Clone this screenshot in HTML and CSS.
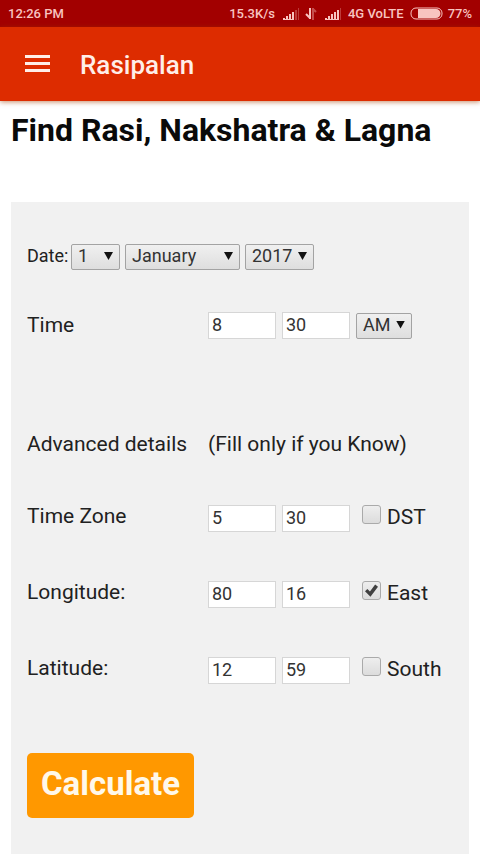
FILE: index.html
```html
<!DOCTYPE html>
<html lang="en">
<head>
<meta charset="utf-8">
<meta name="viewport" content="width=device-width, initial-scale=1">
<title>Rasipalan</title>
<link rel="stylesheet" href="styles.css">
</head>
<body>
<div class="status">
  <span>12:26 PM</span>
  <div class="status-right">
    <span>15.3K/s</span>
    <svg class="signal" width="17" height="12" viewBox="0 0 17 12" fill="currentColor"><path d="M0 10h2v2H0zM3 8h2v4H3zM6 6h2v6H6zM9 4h2v8H9z"/><path d="M0 11h11v1H0z"/><path opacity=".3" d="M12 2h2v10h-2zM15 0h1v12h-1z"/></svg>
    <svg class="arrows" width="12" height="13" viewBox="0 0 12 13" fill="none" stroke="currentColor" stroke-width="2"><path d="M5 1v11M5 11L1 7"/><path opacity=".4" d="M8 13V1M8 2l3 3"/></svg>
    <svg class="signal" width="17" height="12" viewBox="0 0 17 12" fill="currentColor"><path d="M0 10h2v2H0zM3 8h2v4H3zM6 6h2v6H6zM9 4h2v8H9zM12 2h2v10h-2z"/><path d="M0 11h14v1H0z"/><path opacity=".3" d="M15 0h1v12h-1z"/></svg>
    <span class="network">4G VoLTE</span>
    <svg class="battery" width="33" height="13" viewBox="0 0 33 13"><rect x="1" y="1" width="31" height="11" rx="5" fill="none" stroke="currentColor" stroke-width="1"/><path d="M8 2h18a4 4 0 0 1 0 9H8z" fill="currentColor"/></svg>
    <span>77%</span>
  </div>
</div>
<header class="appbar">
  <button class="menu" type="button" aria-label="Menu">
    <svg width="26" height="18" viewBox="0 0 26 18" fill="currentColor"><path d="M1 0h25v3H1zM1 7h25v3H1zM1 14h25v3H1z"/></svg>
  </button>
  <span class="brand">Rasipalan</span>
</header>
<main class="page">
  <h1>Find Rasi, Nakshatra &amp; Lagna</h1>
  <form class="card">
    <div class="date-row">
      <label for="day">Date:</label>
      <span class="select day"><select id="day"><option>1</option></select></span>
      <span class="select month"><select aria-label="Month"><option>January</option></select></span>
      <span class="select year"><select aria-label="Year"><option>2017</option></select></span>
    </div>
    <div class="row time-row">
      <label for="hour">Time</label>
      <div class="fields">
        <input class="num" id="hour" type="text" value="8">
        <input class="num" type="text" aria-label="Minutes" value="30">
        <span class="select ampm"><select aria-label="AM or PM"><option>AM</option></select></span>
      </div>
    </div>
    <div class="row note-row">
      <span>Advanced details</span>
      <span>(Fill only if you Know)</span>
    </div>
    <div class="row">
      <label for="tz">Time Zone</label>
      <div class="fields">
        <input class="num" id="tz" type="text" value="5">
        <input class="num" type="text" aria-label="Time zone minutes" value="30">
        <label class="check"><input type="checkbox">DST</label>
      </div>
    </div>
    <div class="row">
      <label for="lon">Longitude:</label>
      <div class="fields">
        <input class="num" id="lon" type="text" value="80">
        <input class="num" type="text" aria-label="Longitude minutes" value="16">
        <label class="check"><input type="checkbox" checked>East</label>
      </div>
    </div>
    <div class="row">
      <label for="lat">Latitude:</label>
      <div class="fields">
        <input class="num" id="lat" type="text" value="12">
        <input class="num" type="text" aria-label="Latitude minutes" value="59">
        <label class="check"><input type="checkbox">South</label>
      </div>
    </div>
    <button class="calculate" type="button">Calculate</button>
  </form>
</main>
</body>
</html>
```
FILE: styles.css
```css
* {
  box-sizing: border-box;
}

body {
  margin: 0;
  min-height: 100vh;
  display: flex;
  flex-direction: column;
  background: #fff;
  color: #212121;
  font-family: Roboto, sans-serif;
  font-size: 21px;
}

.status {
  display: flex;
  align-items: center;
  justify-content: space-between;
  height: 27px;
  padding: 0 8px;
  background: #a20000;
  color: #f8c4c0;
  font-size: 13px;
  font-weight: 500;
}

.status-right {
  display: flex;
  align-items: center;
  gap: 5px;
}

.signal {
  margin-left: 3px;
}

.network {
  margin: 0 1px;
  word-spacing: normal;
}

.appbar {
  position: relative;
  display: flex;
  align-items: center;
  gap: 30px;
  height: 74px;
  padding: 0 24px;
  background: #dd2c00;
  color: #ffeee8;
  box-shadow: 0 1px 5px rgba(160, 60, 0, 0.6);
}

.menu {
  display: flex;
  padding: 0;
  border: 0;
  background: none;
  color: inherit;
}

.brand {
  padding-top: 2px;
  font-size: 26px;
  font-weight: 500;
  line-height: 32px;
}

.page {
  flex: 1;
  display: flex;
  flex-direction: column;
  padding: 0 11px;
}

h1 {
  margin: 9px 0 52px;
  color: #0a0a0a;
  font-size: 32px;
  font-weight: 700;
  line-height: 40px;
}

.card {
  flex: 1;
  padding: 42px 16px 36px;
  background: #f1f1f1;
}

.date-row {
  display: flex;
  align-items: center;
  gap: 5px;
  margin-bottom: 42px;
  font-size: 18px;
  line-height: 24px;
}

.date-row label {
  width: 39px;
  padding-bottom: 2px;
}

.select {
  position: relative;
  display: inline-flex;
}

.select::after {
  content: "";
  position: absolute;
  top: 8px;
  right: 7px;
  width: 9px;
  height: 8px;
  background: #111;
  clip-path: polygon(0 0, 100% 0, 50% 100%);
  pointer-events: none;
}

select {
  appearance: none;
  width: 100%;
  height: 26px;
  padding: 0 6px 3px;
  border: 1px solid #a3a3a3;
  border-radius: 2px;
  background: linear-gradient(#f0f0f0, #dedede);
  color: #333;
  font: 18px Roboto, sans-serif;
}

.day {
  width: 49px;
}

.month {
  width: 115px;
}

.year {
  width: 69px;
}

.ampm {
  width: 56px;
}

.row {
  display: grid;
  grid-template-columns: 175px 1fr;
  column-gap: 6px;
  align-items: start;
  margin-bottom: 49px;
  line-height: 22px;
}

.time-row {
  align-items: center;
  margin-bottom: 93px;
}

.time-row > label {
  padding-bottom: 2px;
}

.time-row .fields {
  align-items: center;
}

.note-row {
  margin-bottom: 48px;
  line-height: 25px;
  white-space: nowrap;
}

.fields {
  display: flex;
  align-items: start;
  gap: 6px;
}

.num {
  width: 68px;
  height: 27px;
  padding: 0 3px 2px;
  border: 1px solid #d6d6d6;
  background: #fff;
  color: #333;
  font: 18px Roboto, sans-serif;
}

.check {
  display: flex;
  gap: 6px;
  margin-left: 6px;
  line-height: 24px;
}

.check input {
  appearance: none;
  position: relative;
  width: 19px;
  height: 19px;
  margin: 0;
  border: 1px solid #aaa;
  border-radius: 3px;
  background: linear-gradient(#eee, #dcdcdc);
}

.check input:checked::after {
  content: "";
  position: absolute;
  inset: 2px;
  background: #404040;
  clip-path: polygon(0 55%, 18% 38%, 38% 58%, 78% 4%, 100% 22%, 42% 98%);
}

.calculate {
  display: block;
  height: 65px;
  margin-top: 69px;
  padding: 0 14px 4px;
  border: 0;
  border-radius: 5px;
  background: #ff9800;
  color: #fff8ea;
  font: 700 33px Roboto, sans-serif;
}
```
